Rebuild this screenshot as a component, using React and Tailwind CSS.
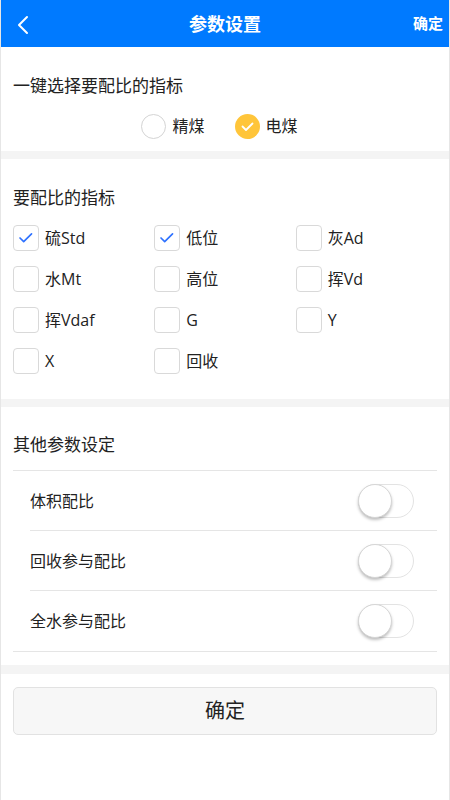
import React from "react";

function Check({ checked, label }) {
  return (
    <div className="flex items-center h-[26px]">
      <div className="w-[26px] h-[26px] rounded-[4px] border border-[#d9d9d9] bg-white flex items-center justify-center shrink-0">
        {checked && (
          <svg width="26" height="26" viewBox="0 0 26 26">
            <polyline points="6.5,13 10.5,17 19,8.5" fill="none" stroke="#2f72ff" strokeWidth="1.8" strokeLinecap="round" strokeLinejoin="round" />
          </svg>
        )}
      </div>
      <span className="ml-[6px] text-[16px] leading-[26px] text-[#222]">{label}</span>
    </div>
  );
}

function Switch() {
  return (
    <div className="w-[56px] h-[34px] rounded-full border border-[#e3e3e3] bg-white relative shrink-0">
      <div className="absolute left-[-1px] top-[-1px] w-[34px] h-[34px] rounded-full bg-white border border-[#d6d6d6] shadow-[0_2px_3px_rgba(0,0,0,0.25)]" />
    </div>
  );
}

export default function App() {
  const items = [
    ["硫Std", true],
    ["低位", true],
    ["灰Ad", false],
    ["水Mt", false],
    ["高位", false],
    ["挥Vd", false],
    ["挥Vdaf", false],
    ["G", false],
    ["Y", false],
    ["X", false],
    ["回收", false],
  ];
  return (
    <div className="min-h-[800px] w-[450px] bg-white border-x border-[#e6e6e6] font-['Open_Sans','Noto_Sans_CJK_SC',sans-serif] text-[#222]">
      <div className="h-[47px] bg-[#007aff] flex items-center relative">
        <svg className="absolute left-[15px] top-[15px]" width="14" height="20" viewBox="0 0 14 20">
          <polyline points="11,2 3,10 11,18" fill="none" stroke="white" strokeWidth="2" strokeLinecap="round" strokeLinejoin="round" />
        </svg>
        <div className="flex-1 text-center text-white font-bold text-[18px] leading-[24px]">参数设置</div>
        <div className="absolute right-[6px] top-[13px] text-white font-bold text-[15px] leading-[20px]">确定</div>
      </div>

      <div className="pt-[27px] pb-[12px]">
        <div className="px-[12px] text-[17px] leading-[24px]">一键选择要配比的指标</div>
        <div className="mt-[15px] flex justify-center pr-[11px] h-[26px] items-center">
          <div className="flex items-center">
            <div className="w-[25px] h-[25px] rounded-full border border-[#d4d4d4] bg-white" />
            <span className="ml-[6px] text-[16px] leading-[26px]">精煤</span>
          </div>
          <div className="flex items-center ml-[30px]">
            <div className="w-[25px] h-[25px] rounded-full bg-[#ffc53a] flex items-center justify-center">
              <svg width="25" height="25" viewBox="0 0 25 25">
                <polyline points="7.5,12.5 11,16 17.5,9.5" fill="none" stroke="white" strokeWidth="1.8" strokeLinecap="round" strokeLinejoin="round" />
              </svg>
            </div>
            <span className="ml-[6px] text-[16px] leading-[26px]">电煤</span>
          </div>
        </div>
      </div>

      <div className="h-[8px] bg-[#f4f4f4]" />

      <div className="pt-[27px] pb-[25px]">
        <div className="px-[12px] text-[17px] leading-[24px]">要配比的指标</div>
        <div className="mt-[15px] px-[12px] grid grid-cols-3 gap-y-[15px]">
          {items.map(([l, c]) => (
            <Check key={l} label={l} checked={c} />
          ))}
        </div>
      </div>

      <div className="h-[8px] bg-[#f4f4f4]" />

      <div className="pt-[26px] pb-[13px]">
        <div className="px-[12px] text-[17px] leading-[24px]">其他参数设定</div>
        <div className="mt-[13px] mx-[12px] border-t border-b border-[#e5e5e5]">
          {["体积配比", "回收参与配比", "全水参与配比"].map((t, i) => (
            <div
              key={t}
              className={`ml-[17px] h-[60px] flex items-center justify-between pr-[23px] ${i < 2 ? "border-b border-[#e5e5e5]" : ""}`}
            >
              <span className="text-[16px] leading-[24px]">{t}</span>
              <Switch />
            </div>
          ))}
        </div>
      </div>

      <div className="h-[9px] bg-[#f4f4f4]" />

      <div className="pt-[13px] px-[12px]">
        <div className="h-[48px] rounded-[5px] border border-[#e2e2e2] bg-[#f7f7f7] flex items-center justify-center text-[20px] leading-[28px]">
          确定
        </div>
      </div>
    </div>
  );
}
